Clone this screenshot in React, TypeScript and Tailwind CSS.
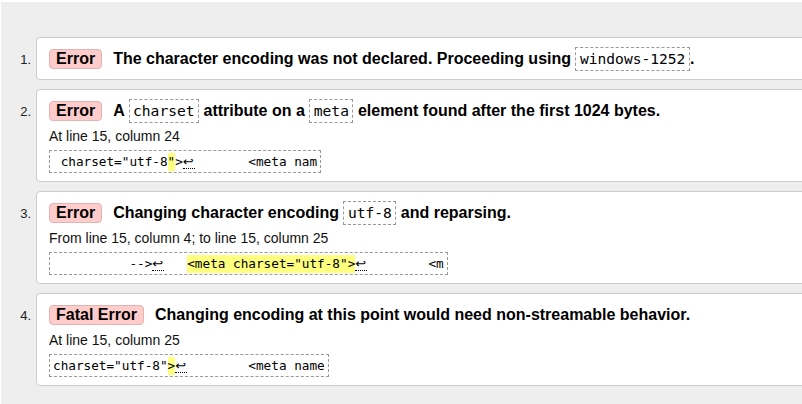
import React from 'react'

const MONO = "font-['DejaVu_Sans_Mono',monospace]"

function Badge({ children }: { children: React.ReactNode }) {
  return (
    <span className="mr-[11px] inline-block rounded-[4px] border border-[#e3b3b3] bg-[#ffcccc] px-[6px] leading-[18px] font-bold">
      {children}
    </span>
  )
}

function Code({ children }: { children: React.ReactNode }) {
  return (
    <code className={`${MONO} inline-block border border-dashed border-[#999] px-[3.5px] text-[14.6px] font-normal leading-[22px]`}>
      {children}
    </code>
  )
}

// newline marker inside a snippet
function Nl() {
  return (
    <span className="inline-block w-[12px] border-b border-dotted border-black font-['DejaVu_Sans',sans-serif] text-[13px] leading-[12px]">
      ↩
    </span>
  )
}

function Hl({ children }: { children: React.ReactNode }) {
  return <span className="inline-block bg-[#ffff80] leading-[18px]">{children}</span>
}

function Snippet({ children }: { children: React.ReactNode }) {
  return (
    <div className={`${MONO} mt-[4px] block h-[23px] w-fit whitespace-pre border border-dashed border-[#999] px-[3px] text-[12.7px] leading-[21px] text-black`}>
      {children}
    </div>
  )
}

interface ItemProps {
  n: number
  badge: string
  title: React.ReactNode
  detail?: string
  snippet?: React.ReactNode
}

function Item({ n, badge, title, detail, snippet }: ItemProps) {
  return (
    <li className="flex items-baseline">
      <span className="w-[35px] shrink-0 pr-[5px] text-right text-[13px] text-[#222]">{n}.</span>
      <div className="flex-1 rounded-[4px] border border-[#cccccc] bg-white pb-[8px] pl-[12px] pt-[8px]">
        <div className="h-[25px] whitespace-nowrap text-[16px] font-bold leading-[25px] text-black">
          <Badge>{badge}</Badge>
          {title}
        </div>
        {detail && <div className="mt-[3px] text-[14px] leading-[20px] text-[#111]">{detail}</div>}
        {snippet && <Snippet>{snippet}</Snippet>}
      </div>
    </li>
  )
}

export default function App() {
  return (
    <div className="min-h-screen bg-white pl-[1px] pt-[2px] font-['Liberation_Sans',Arial,sans-serif]">
      <div className="h-[402px] overflow-hidden bg-[#eeeeee] pt-[35px]">
        <ol className="mr-[-10px] space-y-[9px]">
          <Item
            n={1}
            badge="Error"
            title={<>The character encoding was not declared. Proceeding using <Code>windows-1252</Code>.</>}
          />
          <Item
            n={2}
            badge="Error"
            title={<>A <Code>charset</Code> attribute on a <Code>meta</Code> element found after the first 1024 bytes.</>}
            detail="At line 15, column 24"
            snippet={<>{' charset="utf-8'}<Hl>"</Hl>{'>'}<Nl />{'       <meta nam'}</>}
          />
          <Item
            n={3}
            badge="Error"
            title={<>Changing character encoding <Code>utf-8</Code> and reparsing.</>}
            detail="From line 15, column 4; to line 15, column 25"
            snippet={<>{'          -->'}<Nl />{'   '}<Hl>{'<meta charset="utf-8">'}</Hl><Nl />{'        <m'}</>}
          />
          <Item
            n={4}
            badge="Fatal Error"
            title={<>Changing encoding at this point would need non-streamable behavior.</>}
            detail="At line 15, column 25"
            snippet={<>{'charset="utf-8"'}<Hl>{'>'}</Hl><Nl />{'        <meta name'}</>}
          />
        </ol>
      </div>
    </div>
  )
}
